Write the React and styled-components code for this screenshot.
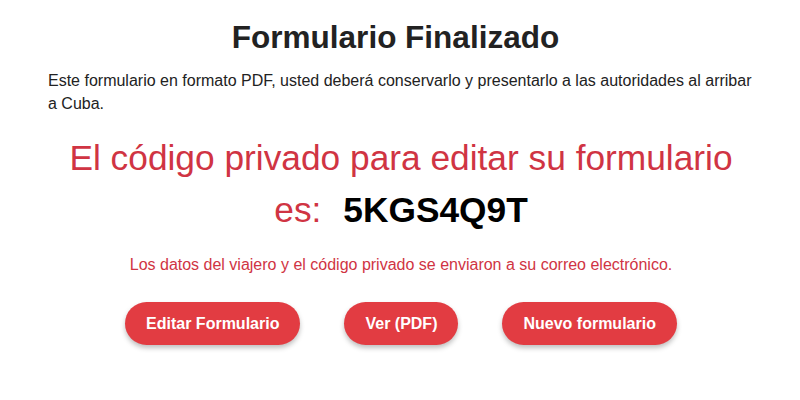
import React from 'react'
import styled, { createGlobalStyle } from 'styled-components'

const GlobalStyle = createGlobalStyle`
  body {
    margin: 0;
    background: #fff;
    font-family: "Liberation Sans", Arial, sans-serif;
  }
`

const Page = styled.div`
  width: 800px;
  height: 400px;
  box-sizing: border-box;
  padding: 18px 46px 0 48px;
  display: flex;
  flex-direction: column;
  align-items: center;
`

const Title = styled.h1`
  margin: 0 11px 0 0;
  font-size: 31.5px;
  line-height: 38px;
  font-weight: 700;
  color: #222;
`

const Intro = styled.p`
  align-self: stretch;
  margin: 13px 0 0;
  font-size: 16px;
  line-height: 23px;
  color: #222;
`

const CodeBlock = styled.h2`
  margin: 17px 0 0;
  font-size: 35.3px;
  line-height: 52px;
  font-weight: 400;
  color: #d03443;
  text-align: center;
`

const Code = styled.span`
  margin-left: 22px;
  font-weight: 700;
  color: #000;
`

const Notice = styled.p`
  margin: 19px 0 0;
  font-size: 16px;
  line-height: 20px;
  color: #d03443;
  text-align: center;
`

const Actions = styled.div`
  display: flex;
  gap: 44px;
  margin-top: 27px;
`

const Button = styled.button`
  height: 43px;
  padding: 0 21px;
  border: none;
  border-radius: 22px;
  background: #e23c42;
  color: #fff;
  font-family: "Liberation Sans", Arial, sans-serif;
  font-size: 16px;
  font-weight: 700;
  box-shadow: 0 3px 5px rgba(0, 0, 0, 0.25);
  cursor: pointer;
`

export default function App() {
  return (
    <>
      <GlobalStyle />
      <Page>
        <Title>Formulario Finalizado</Title>
        <Intro>
          Este formulario en formato PDF, usted deberá conservarlo y presentarlo a las autoridades al arribar a Cuba.
        </Intro>
        <CodeBlock>
          El código privado para editar su formulario
          <br />
          es:<Code>5KGS4Q9T</Code>
        </CodeBlock>
        <Notice>Los datos del viajero y el código privado se enviaron a su correo electrónico.</Notice>
        <Actions>
          <Button>Editar Formulario</Button>
          <Button>Ver (PDF)</Button>
          <Button>Nuevo formulario</Button>
        </Actions>
      </Page>
    </>
  )
}
